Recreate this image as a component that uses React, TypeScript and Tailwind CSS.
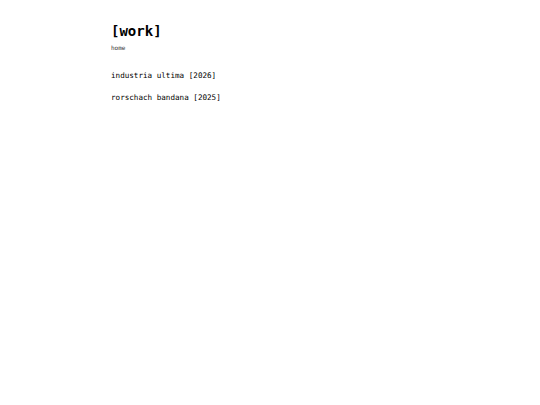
export default function App() {
  const works = [
    { title: "industria ultima", year: 2026 },
    { title: "rorschach bandana", year: 2025 },
  ];

  return (
    <main className="min-h-screen bg-white text-black font-['DejaVu_Sans_Mono',monospace]">
      <div className="mx-auto w-[318px] pt-[22px]">
        <h1 className="text-[14px] font-bold leading-[18px]">[work]</h1>
        <nav className="mt-[4px] text-[6px] leading-[8px] text-[#333]">
          <a href="#">home</a>
        </nav>
        <ul className="mt-[19px] flex flex-col gap-[13px]">
          {works.map((w) => (
            <li key={w.title} className="text-[7.6px] leading-[9px]">
              {w.title} [{w.year}]
            </li>
          ))}
        </ul>
      </div>
    </main>
  );
}
